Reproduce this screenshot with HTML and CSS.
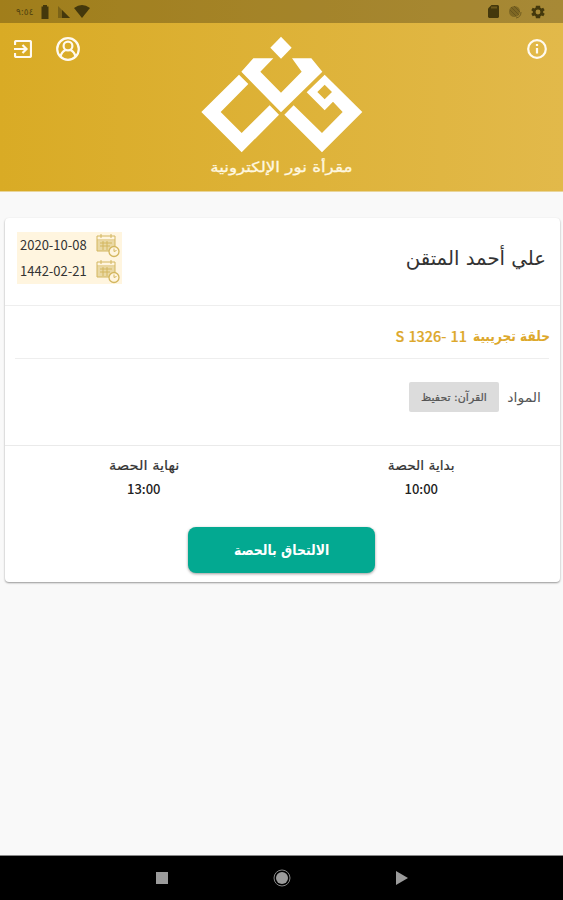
FILE: index.html
```
<!DOCTYPE html>
<html lang="ar" dir="rtl">
<head>
<meta charset="utf-8">
<title>مقرأة نور الإلكترونية</title>
<link rel="stylesheet" href="styles.css">
</head>
<body>
<div class="screen">
  <header class="hero">
    <div class="status" dir="ltr">
      <div class="status-side">
        <span class="clock">٩:٥٤</span>
        <svg class="battery" width="8" height="14" viewBox="0 0 8 14"><path d="M2 0h4v1.500h1.500v12.500h-7V1.500H2z"/></svg>
        <svg class="signal" width="13" height="12" viewBox="0 0 13 12"><path d="M0 0l12 12H0z" opacity=".4"/><path d="M4 4l8 8H4z"/></svg>
        <svg width="16" height="13" viewBox="0 0 16 13"><path d="M0 3Q8-3 16 3L8 13z"/></svg>
      </div>
      <div class="status-side end">
        <svg width="11" height="13" viewBox="0 0 11 13"><path d="M3.500 0H10l1 1v11l-1 1H1l-1-1V3.500z"/><path class="slots" d="M4 1.500v2M6 1.500v2M8 1.500v2"/></svg>
        <svg width="14" height="14" viewBox="0 0 14 14"><circle cx="6.500" cy="6.500" r="5.500" opacity=".4"/><path class="ring" d="M3 2l8 8M6 1l6 6M2 5l6 6M8 13a6 6 0 0 0 5-6"/></svg>
        <svg width="14" height="14" viewBox="2 2 20 20"><path d="M19.400 13a7.500 7.500 0 0 0 0-2l2.100-1.600-2-3.500-2.500 1a7.300 7.300 0 0 0-1.700-1L15 3H9l-.4 2.900a7.300 7.300 0 0 0-1.700 1l-2.500-1-2 3.500L4.600 11a7.500 7.500 0 0 0 0 2l-2.200 1.600 2 3.500 2.500-1a7.300 7.300 0 0 0 1.700 1L9 21h6l.4-2.900a7.300 7.300 0 0 0 1.700-1l2.500 1 2-3.500zM12 15.500a3.500 3.500 0 1 1 0-7 3.500 3.500 0 0 1 0 7z"/></svg>
      </div>
    </div>
    <div class="toolbar" dir="ltr">
      <div class="actions">
        <svg width="18" height="18" viewBox="0 0 18 18"><path class="line" d="M1 5V2.500Q1 1 2.500 1h13Q17 1 17 2.500v13Q17 17 15.500 17h-13Q1 17 1 15.500V13M0 9h12M8.500 5l4 4-4 4"/></svg>
        <svg width="24" height="24" viewBox="0 0 24 24"><circle class="line" cx="12" cy="12" r="10.800"/><circle class="line" cx="12" cy="9" r="4.400"/><path class="line" d="M4.500 19.500Q5.500 15 9.500 13M19.500 19.500Q18.500 15 14.500 13"/></svg>
      </div>
      <div class="brand">
        <svg class="mark" width="162" height="117" viewBox="33 18 486 351">
          <path d="M273 20l32 33-32 33-32-33z"/>
          <path d="M190 85h60l-39 40 62 63 62-63-29-40h58l33 40-124 122-119-122z"/>
          <path d="M147 134l28 28-83 84 63 63 84-83 28 28-112 113L34 246z"/>
          <path fill-rule="evenodd" d="M404 134l113 112-121 121-113-113 28-28 85 83 62-63-29-31-25 26-54-54zM404 164l-22 22 22 22 22-22z"/>
        </svg>
        <div class="brand-name" dir="rtl"><span class="fit">مقرأة نور الإلكترونية</span></div>
      </div>
      <svg class="info" width="20" height="20" viewBox="0 0 20 20"><circle class="line" cx="10" cy="10" r="8.800"/><path class="line" d="M10 9v5.500M10 5v2"/></svg>
    </div>
  </header>

  <main class="card">
    <section class="person">
      <h1>علي أحمد المتقن</h1>
      <div class="dates" dir="ltr">
        <div class="date"><span>2020-10-08</span>
          <svg width="24" height="25" viewBox="0 0 24 25"><path class="cal-fill" d="M1 8h18v10H1z"/><path class="cal" d="M1 3h18v15H1zM1 7h18M5 1v4M15 1v4M4 10h12M4 13h10M7 8v9M11 8v9"/><circle class="dial" cx="18" cy="18.500" r="5"/><path class="cal" d="M18 15.500v3l2.500-1"/></svg>
        </div>
        <div class="date"><span>1442-02-21</span>
          <svg width="24" height="25" viewBox="0 0 24 25"><path class="cal-fill" d="M1 8h18v10H1z"/><path class="cal" d="M1 3h18v15H1zM1 7h18M5 1v4M15 1v4M4 10h12M4 13h10M7 8v9M11 8v9"/><circle class="dial" cx="18" cy="18.500" r="5"/><path class="cal" d="M18 15.500v3l2.500-1"/></svg>
        </div>
      </div>
    </section>
    <section class="course" dir="ltr"><span class="code">S 1326- 11</span><span class="course-name">حلقة تجريبية</span></section>
    <section class="subjects">
      <span class="label">المواد</span>
      <span class="chip">القرآن: تحفيظ</span>
    </section>
    <section class="times">
      <div class="time"><span>بداية الحصة</span><b>10:00</b></div>
      <div class="time last"><span>نهاية الحصة</span><b>13:00</b></div>
    </section>
    <button class="join"><span class="fit">الالتحاق بالحصة</span></button>
  </main>

  <nav class="navbar" dir="ltr">
    <svg width="12" height="12" viewBox="0 0 12 12"><path d="M0 0h12v12H0z"/></svg>
    <svg width="18" height="18" viewBox="0 0 18 18"><circle cx="9" cy="9" r="6"/><circle class="halo" cx="9" cy="9" r="8"/></svg>
    <svg width="12" height="14" viewBox="0 0 12 14"><path d="M0 0l12 7-12 7z"/></svg>
  </nav>
</div>
</body>
</html>
```

FILE: styles.css
```
* { box-sizing: border-box; }
body { margin: 0; background: #f9f9f9; color: #333; font-family: "DejaVu Sans", sans-serif; }
svg { display: block; flex: none; }
.screen { width: 563px; height: 900px; display: flex; flex-direction: column; overflow: hidden; }
.hero { height: 192px; flex: none; background: linear-gradient(90deg, #d9ab25, #e2b94a); border-bottom: 1px solid #e9d59a; }
.status { height: 23px; display: flex; justify-content: space-between; align-items: center; padding: 0 18px 0 16px; background: rgba(0, 0, 0, .26); fill: #44380c; }
.status-side { display: flex; align-items: center; }
.status-side.end { gap: 9px; }
.clock { width: 25px; font-size: 9px; color: #51430f; line-height: 12px; }
.signal { margin: 0 3px 0 9px; }
.slots { stroke: #94782a; }
.ring { fill: none; stroke: #65521a; stroke-width: .8; }
.toolbar { display: grid; grid-template-columns: 1fr 162px 1fr; align-items: start; padding: 14px 16px 0 14px; }
.actions { display: flex; align-items: center; gap: 24px; }
.line { fill: none; stroke: #fffaf0; stroke-width: 2.2; }
.info { justify-self: end; margin-top: 2px; }
.brand { display: flex; flex-direction: column; align-items: center; margin: -1px -1px 0 1px; color: #fff8e0; }
.mark { fill: #fff; }
.fit { display: inline-block; }
.brand-name { font-size: 14px; line-height: 24px; margin-top: 2px; white-space: nowrap; }
.brand-name .fit { transform: scaleX(1.2); -webkit-text-stroke: .3px; }
.card { width: 555px; height: 364px; flex: none; margin: 26px auto 0; transform: translateX(1px); background: #fff; border-radius: 4px; box-shadow: 0 1px 2px rgba(0, 0, 0, .4); }
.person { height: 88px; display: flex; justify-content: space-between; align-items: flex-start; padding: 14px 14px 0 12px; border-bottom: 1px solid #eee; }
h1 { margin: 11px 0 0; font-size: 19.7px; line-height: 32px; font-weight: 400; }
.dates { width: 105px; height: 52px; background: #fff5df; font: 13px/26px "Noto Sans CJK JP", sans-serif; }
.date { height: 26px; display: flex; align-items: center; justify-content: space-between; padding: 0 2px 0 3px; }
.cal { fill: none; stroke: #d3b65e; }
.cal-fill { fill: #ead9a5; }
.dial { fill: #fff5df; stroke: #d3b65e; stroke-width: 1.3; }
.course { height: 53px; margin: 0 11px 0 10px; display: flex; justify-content: flex-end; align-items: center; gap: 6px; padding-top: 7px; color: #dda82b; border-bottom: 1px solid #eee; white-space: nowrap; }
.code { font: 500 14.4px/24px "Noto Sans CJK JP", sans-serif; word-spacing: 1px; -webkit-text-stroke: .2px; }
.course-name { width: 76px; font: 700 14px/24px "DejaVu Sans", sans-serif; transform: scaleX(.87); transform-origin: left; }
.subjects { height: 87px; display: flex; align-items: center; gap: 8px; padding: 0 19px 10px 0; font-size: 12px; color: #555; border-bottom: 1px solid #eaeaea; }
.label { width: 34px; font-size: 13px; transform: scaleX(1.08); transform-origin: right; }
.chip { width: 90px; height: 30px; display: flex; align-items: center; justify-content: center; background: #dcdcdc; border-radius: 2px; font-size: 11px; -webkit-text-stroke: .2px; }
.times { height: 80px; display: grid; grid-template-columns: 1fr 1fr; padding-top: 8px; }
.time { display: flex; flex-direction: column; align-items: center; font-size: 13.8px; line-height: 23px; -webkit-text-stroke: .2px; }
.time.last span { transform: scaleX(1.06); }
.time b { font: 500 13px/23px "Noto Sans CJK JP", sans-serif; color: #222; -webkit-text-stroke: 0; }
.join { display: flex; align-items: center; justify-content: center; width: 187px; height: 46px; margin: 1px 185px 0 183px; padding: 0; border: 0; border-radius: 8px; background: #03a991; color: #fff; font: 700 14px "DejaVu Sans", sans-serif; box-shadow: 0 1px 3px rgba(0, 0, 0, .4); }
.join .fit { transform: scaleX(.89); }
.navbar { height: 45px; margin-top: auto; display: flex; justify-content: space-between; align-items: center; padding: 0 155px 0 156px; background: #000; border-top: 1px solid #888; fill: #9b9b9b; }
.halo { fill: none; stroke: #858585; }
```
